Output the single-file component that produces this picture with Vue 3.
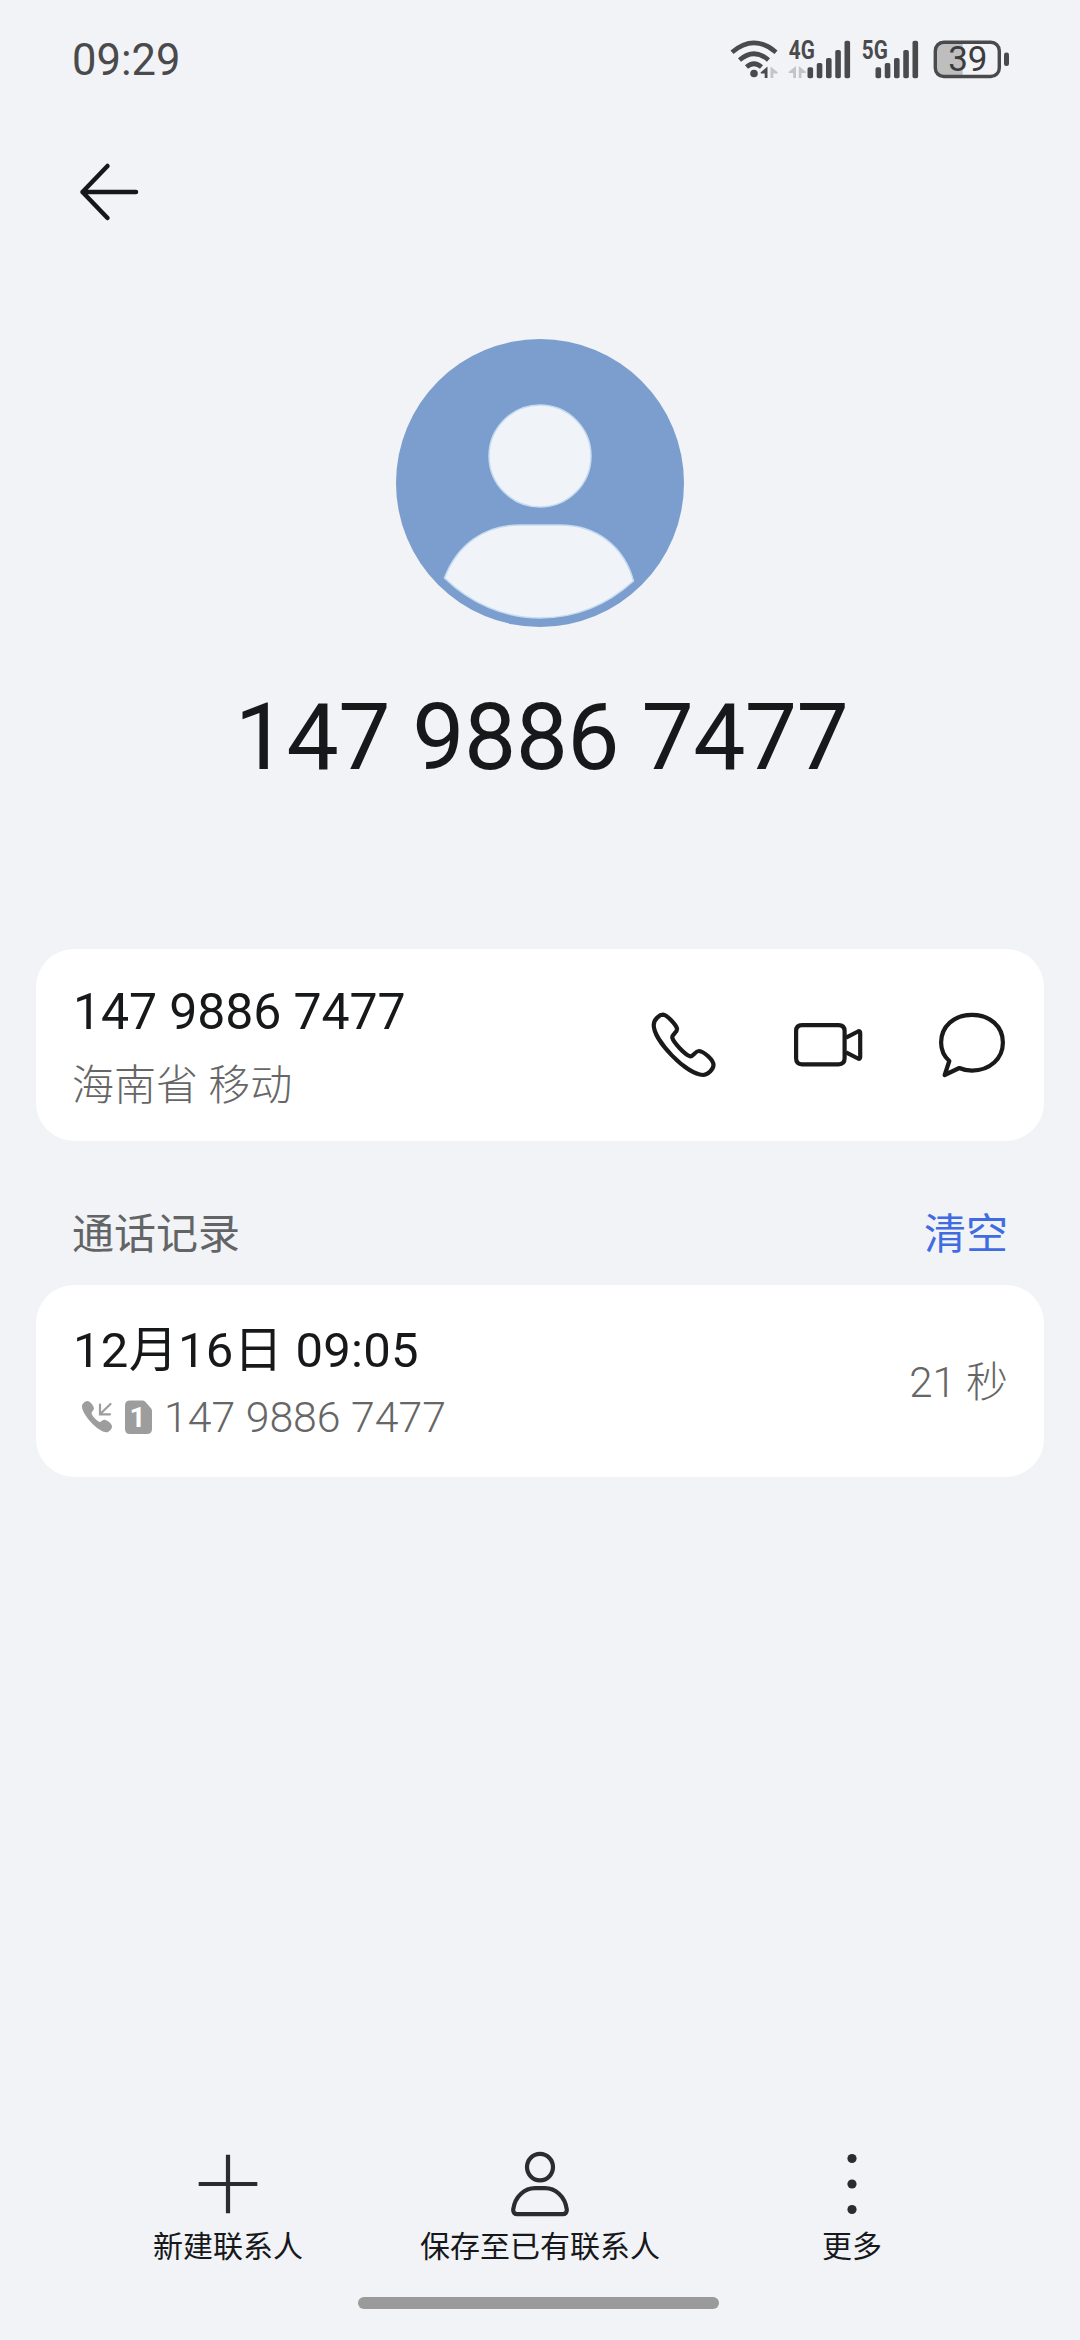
<template>
  <div class="page">
    <header class="status-bar">
      <span class="clock">09:29</span>
      <div class="status-icons">
        <svg width="58" height="56" viewBox="30 12 58 56">
          <g fill="none" stroke="#4a4a4c" stroke-width="4.6">
            <path d="M32 32.2Q54 13.5 76 32.2" />
            <path d="M39.5 40Q54 27.5 68.5 40" />
            <path d="M46.5 47Q54 40.5 61.5 47" />
          </g>
          <circle cx="54" cy="53.5" r="3.8" fill="#4a4a4c" />
          <path d="M60.5 52.5L67.5 46.5V58H64.7V53.5H61Z" fill="#4a4a4c" />
          <path d="M78 52.5L70.5 46.5V58H73.3V53.5H77Z" fill="#c4c4c6" />
        </svg>
        <svg v-for="sinal in sinais" :key="sinal.tipo" width="72" height="56" viewBox="0 12 72 56">
          <text :x="sinal.textoX" y="39" textLength="26" lengthAdjust="spacingAndGlyphs" class="rede">{{ sinal.tipo }}</text>
          <g v-if="sinal.dados" fill="#c4c4c6">
            <path d="M0.5 52L8 46V58H5.2V53H1Z" />
            <path d="M18 52L10.8 46V58H13.5V53H17.5Z" />
          </g>
          <rect
            v-for="(topo, i) in barras"
            :key="topo"
            :x="sinal.barraX + i * 9.25"
            :y="topo"
            width="5.6"
            :height="58.2 - topo"
            rx="1.8"
            fill="#4a4a4c"
          />
        </svg>
        <svg width="78" height="56" viewBox="232 12 78 56">
          <path d="M243 21H262.7V58H243Q235 58 235 50V29Q235 21 243 21Z" fill="#bebebf" />
          <rect x="235.3" y="22.3" width="64" height="34.2" rx="8.5" fill="none" stroke="#4a4a4c" stroke-width="3.4" />
          <rect x="304" y="32.5" width="5" height="13.5" rx="2.2" fill="#4a4a4c" />
          <text x="267.8" y="51.4" text-anchor="middle" class="carga">39</text>
        </svg>
      </div>
    </header>

    <nav class="nav">
      <svg width="72" height="72" viewBox="0 0 72 72" fill="none" stroke="#17171a" stroke-width="4.5" stroke-linecap="round" stroke-linejoin="round">
        <path d="M35.5 10L10.5 36L35.5 62M10.5 36H64" />
      </svg>
    </nav>

    <section class="perfil">
      <svg width="288" height="288" viewBox="0 0 288 288">
        <circle cx="144" cy="144" r="144" fill="#7b9ecf" />
        <g fill="#f0f4f9" stroke="#c5dcf0" stroke-width="1.5">
          <circle cx="144" cy="117" r="51" />
          <path d="M48.5 239C61 206 88 186 124 186H164C200 186 228 207 237.5 242C211 266 179 279 144 279C108 279 74 264 48.5 239Z" />
        </g>
      </svg>
      <h1>{{ numero }}</h1>
    </section>

    <section class="card card-numero">
      <div class="linhas">
        <div class="numero">{{ numero }}</div>
        <div class="operadora">海南省 移动</div>
      </div>
      <div class="acoes">
        <svg v-for="acao in acoes" :key="acao.nome" width="72" height="72" viewBox="0 0 72 72">
          <path v-for="d in acao.paths" :key="d" :d="d" />
        </svg>
      </div>
    </section>

    <div class="titulo-registo">
      <span>通话记录</span>
      <a class="limpar">清空</a>
    </div>

    <section class="card card-registo">
      <div class="linhas">
        <div class="data">12月16日 09:05</div>
        <div class="chamada">
          <svg class="recebida" width="32" height="34" viewBox="0 0 32 34">
            <path
              d="M1 7C0.5 4 4 1 6.5 1C9 1 13 6 13 8.5C13 10.5 10.5 11.5 10.5 13C10.5 15.5 16.5 21.8 19 22C20.5 22 21.5 19.8 23.5 19.8C26 20 31 23.5 31 26.5C31 29 28 32.3 25.5 32.3C17 32 1.5 15 1 7Z"
              fill="#9d9d9d"
            />
            <path d="M29.5 4L19 14.3M19 4.5V14.3H29" fill="none" stroke="#9d9d9d" stroke-width="2.2" stroke-linecap="round" />
          </svg>
          <svg class="sim" width="27" height="34" viewBox="0 0 27 34">
            <path d="M5 0.5H17.5Q19 0.5 20 1.6L25.8 8Q27 9.2 27 11V29Q27 34 22 34H5Q0 34 0 29V5.5Q0 0.5 5 0.5Z" fill="#9d9d9d" />
            <text x="12.5" y="27" text-anchor="middle" class="sim-numero">1</text>
          </svg>
          <span>{{ numero }}</span>
        </div>
      </div>
      <span class="duracao">21 秒</span>
    </section>

    <footer class="rodape">
      <div v-for="item in menu" :key="item.nome" class="item">
        <svg width="72" height="72" viewBox="0 0 72 72">
          <path v-for="d in item.paths" :key="d" :d="d" />
          <circle v-for="y in item.pontos" :key="y" cx="36" :cy="y" r="4.6" class="ponto" />
        </svg>
        <span>{{ item.nome }}</span>
      </div>
    </footer>
    <div class="barra-inicio"></div>
  </div>
</template>

<script setup>
const numero = '147 9886 7477';

// Topo de cada barra de sinal
const barras = [47.3, 43, 38, 30, 20.8];

const sinais = [
  { tipo: '4G', textoX: 0.8, barraX: 19.5, dados: true },
  { tipo: '5G', textoX: 1.8, barraX: 15.5, dados: false }
];

const acoes = [
  {
    nome: 'telefone',
    paths: [
      'M5.7 16C5.7 10 12 5.7 15 5.7C19 6 28 15.5 29 19.5C29.8 23.5 23.5 25.5 24.3 28.8C25.5 33.5 37 45.8 42 47.3C45.5 48 47 41.7 51 42C56 42.5 65.5 51 65.5 56C65.5 60 60 66 55 66C38 65 6 32 5.7 16Z'
    ]
  },
  {
    nome: 'video',
    paths: [
      'M10 16.2H46.5Q52.6 16.2 52.6 22.2V49.3Q52.6 55.3 46.5 55.3H10Q4.1 55.3 4.1 49.3V22.2Q4.1 16.2 10 16.2Z',
      'M54 28.6L66 22.5Q68.2 21.5 68.2 24V48Q68.2 50.5 66 49.5L54 43.4'
    ]
  },
  {
    nome: 'mensagem',
    paths: [
      'M13.3 52C8 47.3 5.1 41 5.1 33.5C5.1 17.5 18 5.8 36 5.8C54 5.8 66.9 17.5 66.9 33.5C66.9 49.5 54 61.6 36 61.6C31.5 61.6 27 60.7 23.3 59L8.7 66Z'
    ]
  }
];

const menu = [
  { nome: '新建联系人', paths: ['M36 6.7V65.3M6.7 36H65.3'] },
  {
    nome: '保存至已有联系人',
    paths: [
      'M36 5.8A13 13.3 0 1 1 36 32.4A13 13.3 0 1 1 36 5.8Z',
      'M13.5 66.2H58.5Q63 66.2 62.8 61.5C61 48 51 40.2 41 40.2H31C21 40.2 11 48 9.2 61.5Q9 66.2 13.5 66.2Z'
    ]
  },
  { nome: '更多', paths: [], pontos: [10.5, 36, 61.5] }
];
</script>

<style>
body {
  background-color: #f1f3f7;
}
</style>

<style scoped>
.page {
  display: flex;
  flex-direction: column;
  box-sizing: border-box;
  width: 1080px;
  height: 2340px;
  padding-bottom: 31px;
  background-color: #f1f3f7;
  color: #17181a;
  font-family: Roboto, "Noto Sans CJK SC", sans-serif;
}

svg {
  display: block;
  flex-shrink: 0;
}

.status-bar {
  display: flex;
  align-items: center;
  justify-content: space-between;
  height: 120px;
  padding: 0 70px 0 72px;
}

.clock {
  padding-top: 2px;
  color: #4a4a4c;
  font-size: 43.5px;
  line-height: 60px;
}

.status-icons {
  display: flex;
}

.rede {
  font-size: 25px;
  font-weight: bold;
  fill: #4a4a4c;
}

.carga {
  font-size: 35px;
  fill: #3c3c3e;
}

.nav {
  display: flex;
  align-items: center;
  height: 144px;
  padding-left: 72px;
}

.perfil {
  display: flex;
  flex-direction: column;
  align-items: center;
  padding-top: 75px;
}

h1 {
  margin: 56px 0 0;
  padding-left: 3px;
  font-size: 93px;
  font-weight: 400;
  line-height: 110px;
  letter-spacing: -0.6px;
}

.card {
  display: flex;
  box-sizing: border-box;
  justify-content: space-between;
  align-items: center;
  height: 192px;
  margin: 0 36px;
  padding: 0 36px;
  border-radius: 38px;
  background-color: #ffffff;
}

.card-numero {
  margin-top: 156px;
}

.linhas {
  display: flex;
  flex-direction: column;
  line-height: 60px;
}

.card-numero .linhas {
  gap: 14px;
  padding-top: 8px;
}

.card-registo .linhas {
  gap: 6px;
  padding-top: 6px;
}

.numero {
  padding-left: 1px;
  font-size: 50px;
  letter-spacing: -0.1px;
}

.operadora {
  font-size: 42px;
  font-weight: 300;
  color: #666666;
}

.acoes {
  display: flex;
  gap: 72px;
}

.acoes svg,
.item svg {
  fill: none;
  stroke: #1a1a1a;
  stroke-width: 4.2;
  stroke-linejoin: round;
}

.titulo-registo {
  display: flex;
  justify-content: space-between;
  align-items: center;
  height: 100px;
  padding: 44px 72px 0;
  font-size: 42px;
  line-height: 60px;
  color: #636466;
}

.limpar {
  color: #3f6ce0;
}

.data {
  padding-left: 1px;
  font-size: 49px;
  letter-spacing: 0.3px;
}

.chamada {
  display: flex;
  align-items: center;
  padding-left: 9px;
  font-size: 42.8px;
  font-weight: 300;
  color: #666666;
}

.recebida {
  margin-right: 12px;
}

.sim {
  margin-right: 12px;
}

.sim-numero {
  font-size: 28px;
  font-weight: bold;
  fill: #ffffff;
}

.duracao {
  padding-bottom: 6px;
  font-size: 42px;
  font-weight: 300;
  color: #666666;
}

.rodape {
  display: flex;
  margin: auto 72px 32px;
}

.item {
  display: flex;
  flex: 1;
  flex-direction: column;
  align-items: center;
  gap: 9px;
  font-size: 30px;
  line-height: 36px;
}

.item svg {
  stroke: #2b2c2e;
}

.item .ponto {
  fill: #2b2c2e;
  stroke: none;
}

.barra-inicio {
  align-self: center;
  width: 361px;
  height: 12px;
  margin-right: 4px;
  border-radius: 6px;
  background-color: #999a99;
}
</style>
